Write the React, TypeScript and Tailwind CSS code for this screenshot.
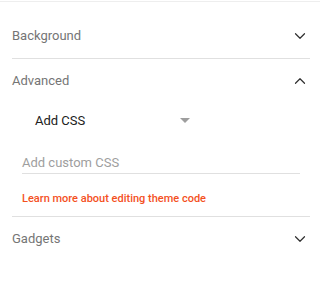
import { ChevronDown, ChevronUp } from "lucide-react";

const Header = ({ label, open }: { label: string; open?: boolean }) => (
  <div className="flex h-[44px] items-center justify-between">
    <span className="text-[13px] text-[#757575]">{label}</span>
    {open ? (
      <ChevronUp size={18} strokeWidth={1.6} className="mr-[1px] text-[#303030]" />
    ) : (
      <ChevronDown size={18} strokeWidth={1.6} className="mr-[1px] text-[#303030]" />
    )}
  </div>
);

export default function App() {
  return (
    <div
      className="h-[283px] w-[320px] bg-white"
      style={{ fontFamily: "Roboto, 'Liberation Sans', sans-serif" }}
    >
      <div className="h-[2px] border-b border-[#eeeeee]" />
      <div className="pl-[12px] pr-[10px] pt-[12px]">
        <Header label="Background" />
        <div className="border-b border-[#e0e0e0]" />
        <Header label="Advanced" open />
        <div className="flex h-[35px] items-center pl-[23px]">
          <span className="w-[145px] text-[13px] text-[#212121]">Add CSS</span>
          <span className="h-0 w-0 border-x-[5px] border-t-[5px] border-x-transparent border-t-[#9e9e9e]" />
        </div>
        <div className="pl-[10px] pr-[10px]">
          <div className="flex h-[36px] items-end border-b border-[#e0e0e0] pb-[1px] text-[13px] leading-[18px] text-[#9e9e9e]">
            Add custom CSS
          </div>
          <div className="mt-[17px] text-[11px] font-medium leading-[16px] text-[#f4511e]">
            Learn more about editing theme code
          </div>
        </div>
        <div className="mt-[9px] border-b border-[#e0e0e0]" />
        <Header label="Gadgets" />
      </div>
    </div>
  );
}
